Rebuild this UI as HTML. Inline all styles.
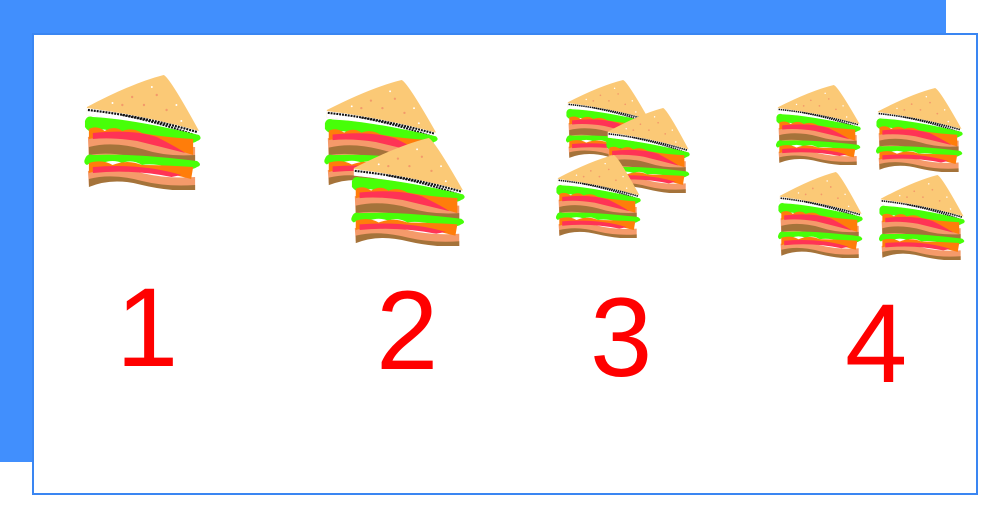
<!DOCTYPE html>
<html><head><meta charset="utf-8"><style>
html,body{margin:0;padding:0;width:992px;height:515px;overflow:hidden;background:#fff;}
.bg{position:absolute;left:0;top:0;width:946px;height:462px;background:#418ffd;}
.card{position:absolute;left:32px;top:33px;width:942px;height:458px;background:#fff;border:2px solid #3a86f2;}
svg.s{position:absolute;}
.n{position:absolute;color:#ff0000;font-family:"Liberation Sans",sans-serif;font-size:112px;line-height:1;}
</style></head><body>
<div class="bg"></div><div class="card"></div>
<svg width="0" height="0" style="position:absolute">
<defs>
<symbol id="sw" viewBox="0 0 120 115" preserveAspectRatio="none">
<path d="M4 32 Q50 8 82 0 Q88 2 118 56 L112 60 Q60 46 4 40 Z" fill="#fbc976"/>
<g fill="#f39a6a"><circle cx="50" cy="22" r="1.2"/><circle cx="62" cy="30" r="1.2"/><circle cx="75" cy="20" r="1.2"/><circle cx="85" cy="35" r="1.2"/><circle cx="40" cy="30" r="1.2"/></g>
<g fill="#fff"><circle cx="70" cy="12" r="1"/><circle cx="95" cy="30" r="1"/><circle cx="30" cy="28" r="1"/><circle cx="100" cy="46" r="1"/></g>
<path d="M5 62 Q30 56 60 64 Q85 72 114 72 L114 90 Q60 80 6 84Z" fill="#f59a6a"/>
<path d="M5 96 Q30 90 60 98 Q85 104 114 102 L114 115 Q85 114 60 108 Q30 100 6 110Z" fill="#f59a6a"/>
<path d="M6 72 Q30 66 60 74 Q85 82 114 80 L114 90 Q85 90 60 84 Q30 76 6 80Z" fill="#a5733a"/>
<path d="M6 104 Q30 98 60 106 Q85 112 114 110 L114 116 Q85 116 60 110 Q30 102 6 112Z" fill="#a5733a"/>
<path d="M4 33 Q60 40 118 56 L117 62 Q60 46 4 40 Z" fill="#fff"/>
<path d="M5 35 Q60 41 116 57" stroke="#111" stroke-width="2.2" stroke-dasharray="2 1" fill="none"/>
<path d="M40 40 Q80 48 116 61" stroke="#111" stroke-width="2" stroke-dasharray="2 1" fill="none"/>
<path d="M2 46 Q4 40 10 42 Q50 44 118 60 Q122 64 116 66 Q110 70 104 66 Q96 72 90 66 Q80 66 72 62 Q62 58 50 60 Q40 54 30 58 Q22 52 12 56 Q6 58 2 52Z" fill="#47ff08"/>
<path d="M6 54 Q14 50 22 56 Q32 50 40 56 Q50 52 60 58 Q80 62 112 64 L112 80 Q80 70 50 62 Q25 60 6 64Z" fill="#ff7d0a"/>
<path d="M10 58 Q50 54 75 62 Q95 72 104 78 Q80 72 55 66 Q30 62 10 64Z" fill="#ff3355"/>
<path d="M2 84 Q4 78 10 80 Q50 78 116 86 Q122 90 116 92 Q110 96 104 92 Q94 98 88 92 Q70 88 60 90 Q50 84 40 88 Q30 84 20 88 Q10 86 4 90 Q0 88 2 84Z" fill="#47ff08"/>
<path d="M6 88 Q20 84 30 90 Q45 84 60 90 Q80 90 112 92 L110 104 Q80 96 50 94 Q25 92 6 98Z" fill="#ff7d0a"/>
<path d="M10 92 Q60 88 100 100 L90 102 Q50 94 10 98Z" fill="#ff3355"/>
</symbol></defs></svg>
<svg class="s" style="left:83px;top:75px" width="118" height="115"><use href="#sw" width="118" height="115"/></svg>
<svg class="s" style="left:323px;top:80px" width="115" height="108"><use href="#sw" width="115" height="108"/></svg>
<svg class="s" style="left:350px;top:138px" width="115" height="108"><use href="#sw" width="115" height="108"/></svg>
<svg class="s" style="left:565px;top:80px" width="85" height="80"><use href="#sw" width="85" height="80"/></svg>
<svg class="s" style="left:605px;top:108px" width="85" height="85"><use href="#sw" width="85" height="85"/></svg>
<svg class="s" style="left:555px;top:155px" width="86" height="83"><use href="#sw" width="86" height="83"/></svg>
<svg class="s" style="left:775px;top:85px" width="86" height="80"><use href="#sw" width="86" height="80"/></svg>
<svg class="s" style="left:875px;top:88px" width="88" height="84"><use href="#sw" width="88" height="84"/></svg>
<svg class="s" style="left:777px;top:172px" width="86" height="86"><use href="#sw" width="86" height="86"/></svg>
<svg class="s" style="left:878px;top:175px" width="87" height="85"><use href="#sw" width="87" height="85"/></svg>
<div class="n" style="left:116px;top:272px">1</div>
<div class="n" style="left:376px;top:275px">2</div>
<div class="n" style="left:590px;top:282px">3</div>
<div class="n" style="left:845px;top:288px">4</div>
</body></html>
